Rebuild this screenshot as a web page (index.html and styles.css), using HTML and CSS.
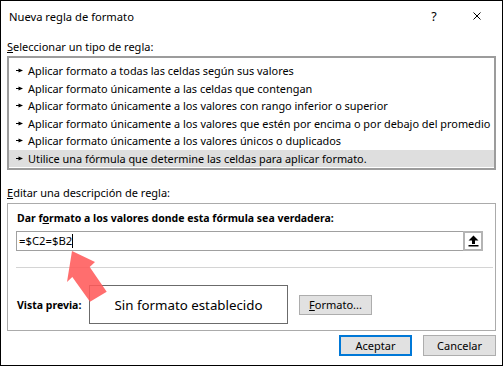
FILE: index.html
```html
<!DOCTYPE html>
<html lang="es">
<head>
<meta charset="utf-8">
<title>Nueva regla de formato</title>
<link rel="stylesheet" href="styles.css">
</head>
<body>
<div class="dialog">
  <div class="titlebar">
    <span class="title">Nueva regla de formato</span>
    <span class="cap-help">?</span>
    <span class="cap-close"><svg width="8" height="8" viewBox="0 0 8 8"><path d="M0.5 0.5L7.5 7.5M7.5 0.5L0.5 7.5" stroke="#000" stroke-width="1" fill="none"/></svg></span>
  </div>
  <div class="content">
    <div class="label label-top"><u>S</u>eleccionar un tipo de regla:</div>
    <ul class="rules">
      <li><svg class="mk" width="7" height="5" viewBox="0 0 7 5"><path d="M0 2h2.5V0.5L7 2.5L2.5 4.5V3H0z" fill="#000"/></svg>Aplicar formato a todas las celdas según sus valores</li>
      <li><svg class="mk" width="7" height="5" viewBox="0 0 7 5"><path d="M0 2h2.5V0.5L7 2.5L2.5 4.5V3H0z" fill="#000"/></svg>Aplicar formato únicamente a las celdas que contengan</li>
      <li><svg class="mk" width="7" height="5" viewBox="0 0 7 5"><path d="M0 2h2.5V0.5L7 2.5L2.5 4.5V3H0z" fill="#000"/></svg>Aplicar formato únicamente a los valores con rango inferior o superior</li>
      <li><svg class="mk" width="7" height="5" viewBox="0 0 7 5"><path d="M0 2h2.5V0.5L7 2.5L2.5 4.5V3H0z" fill="#000"/></svg>Aplicar formato únicamente a los valores que estén por encima o por debajo del promedio</li>
      <li><svg class="mk" width="7" height="5" viewBox="0 0 7 5"><path d="M0 2h2.5V0.5L7 2.5L2.5 4.5V3H0z" fill="#000"/></svg>Aplicar formato únicamente a los valores únicos o duplicados</li>
      <li class="selected"><svg class="mk" width="7" height="5" viewBox="0 0 7 5"><path d="M0 2h2.5V0.5L7 2.5L2.5 4.5V3H0z" fill="#000"/></svg>Utilice una fórmula que determine las celdas para aplicar formato.</li>
    </ul>
    <div class="label label-edit"><u>E</u>ditar una descripción de regla:</div>
    <div class="group">
      <div class="bold heading">Dar f<u>o</u>rmato a los valores donde esta fórmula sea verdadera:</div>
      <div class="input">
        <span class="value">=$C2=$B2</span><span class="caret"></span>
        <span class="ref-btn"><svg width="11" height="12" viewBox="0 0 11 12"><path d="M5.5 0.5L10.5 5.5H7V9H4V5.5H0.5z" fill="#000"/><rect x="0.5" y="10" width="10" height="1.5" fill="#000"/></svg></span>
      </div>
      <div class="sep"></div>
      <div class="preview-row">
        <span class="bold preview-label">Vista previa:</span>
        <div class="preview">Sin formato establecido</div>
        <span class="btn btn-format"><u>F</u>ormato...</span>
      </div>
    </div>
    <div class="actions">
      <span class="btn btn-primary">Aceptar</span>
      <span class="btn">Cancelar</span>
    </div>
  </div>
  <svg class="pointer" width="503" height="366" viewBox="0 0 503 366"><polygon points="72,251 95,262 89.7,267.1 106.7,291.7 90,301.7 72.3,276.9 67,282" fill="#ff5a5a" fill-opacity="0.88"/></svg>
</div>
</body>
</html>
```

FILE: styles.css
```css
body {
  margin: 0;
  background: #fff;
}

.dialog {
  position: relative;
  width: 503px;
  height: 366px;
  box-sizing: border-box;
  border: 1px solid #000;
  background: #fff;
  color: #000;
  font-family: "Noto Sans", sans-serif;
  font-size: 11px;
  overflow: hidden;
}

.titlebar {
  height: 30px;
  display: flex;
  align-items: center;
  padding-left: 8px;
}

.title {
  font-size: 11.2px;
}

.cap-help {
  margin-left: auto;
  width: 20px;
  text-align: center;
  font-size: 12.5px;
}

.cap-close {
  margin-left: 26px;
  margin-right: 19px;
  width: 13px;
  display: flex;
  justify-content: center;
}

.content {
  padding: 0 6px;
}

.label {
  line-height: 18px;
}

.label-top {
  margin-top: 7px;
}

.label-edit {
  margin-top: 14px;
}

.rules {
  list-style: none;
  margin: 0;
  padding: 4px 0 1px;
  border: 2px solid #9c9c9c;
  font-size: 10.9px;
}

.rules li {
  height: 17.5px;
  line-height: 17.5px;
  display: flex;
  align-items: center;
  white-space: nowrap;
}

.rules li.selected {
  background: #dedede;
}

.mk {
  margin-left: 7px;
  margin-right: 5px;
  flex: none;
}

.group {
  margin-top: 1px;
  border: 1px solid #ababab;
  padding: 5px 12px 6px 8px;
}

.bold {
  font-weight: bold;
  font-size: 10.5px;
}

.heading {
  line-height: 18px;
  padding-left: 1px;
}

.input {
  margin-top: 4px;
  height: 20px;
  box-sizing: border-box;
  border: 1px solid #a0a0a0;
  display: flex;
  align-items: center;
  padding-left: 2px;
  font-size: 11.3px;
}

.value {
  line-height: 16px;
}

.caret {
  width: 1px;
  height: 14px;
  background: #000;
}

.ref-btn {
  margin-left: auto;
  width: 20px;
  height: 20px;
  margin-right: -1px;
  box-sizing: border-box;
  border: 2px solid #b4b4b4;
  background: #fff;
  display: flex;
  align-items: center;
  justify-content: center;
}

.sep {
  margin-top: 16px;
  margin-right: -10px;
  height: 1px;
  background: #d4d4d4;
}

.preview-row {
  margin-top: 17px;
  display: flex;
  align-items: center;
}

.preview-label {
  width: 73px;
  padding-left: 1px;
  box-sizing: border-box;
}

.preview {
  width: 199px;
  height: 39px;
  box-sizing: border-box;
  border: 1px solid #6b6b6b;
  display: flex;
  align-items: center;
  justify-content: center;
  font-size: 13.3px;
}

.btn {
  width: 73px;
  height: 21px;
  box-sizing: border-box;
  border: 1px solid #adadad;
  background: #e1e1e1;
  display: flex;
  align-items: center;
  justify-content: center;
}

.btn-format {
  margin-left: 11px;
  height: 20px;
}

.actions {
  margin-top: 4px;
  display: flex;
  justify-content: flex-end;
  gap: 11px;
}

.btn-primary {
  border: 2px solid #0078d7;
}

.pointer {
  position: absolute;
  left: -1px;
  top: -1px;
  pointer-events: none;
}
```
